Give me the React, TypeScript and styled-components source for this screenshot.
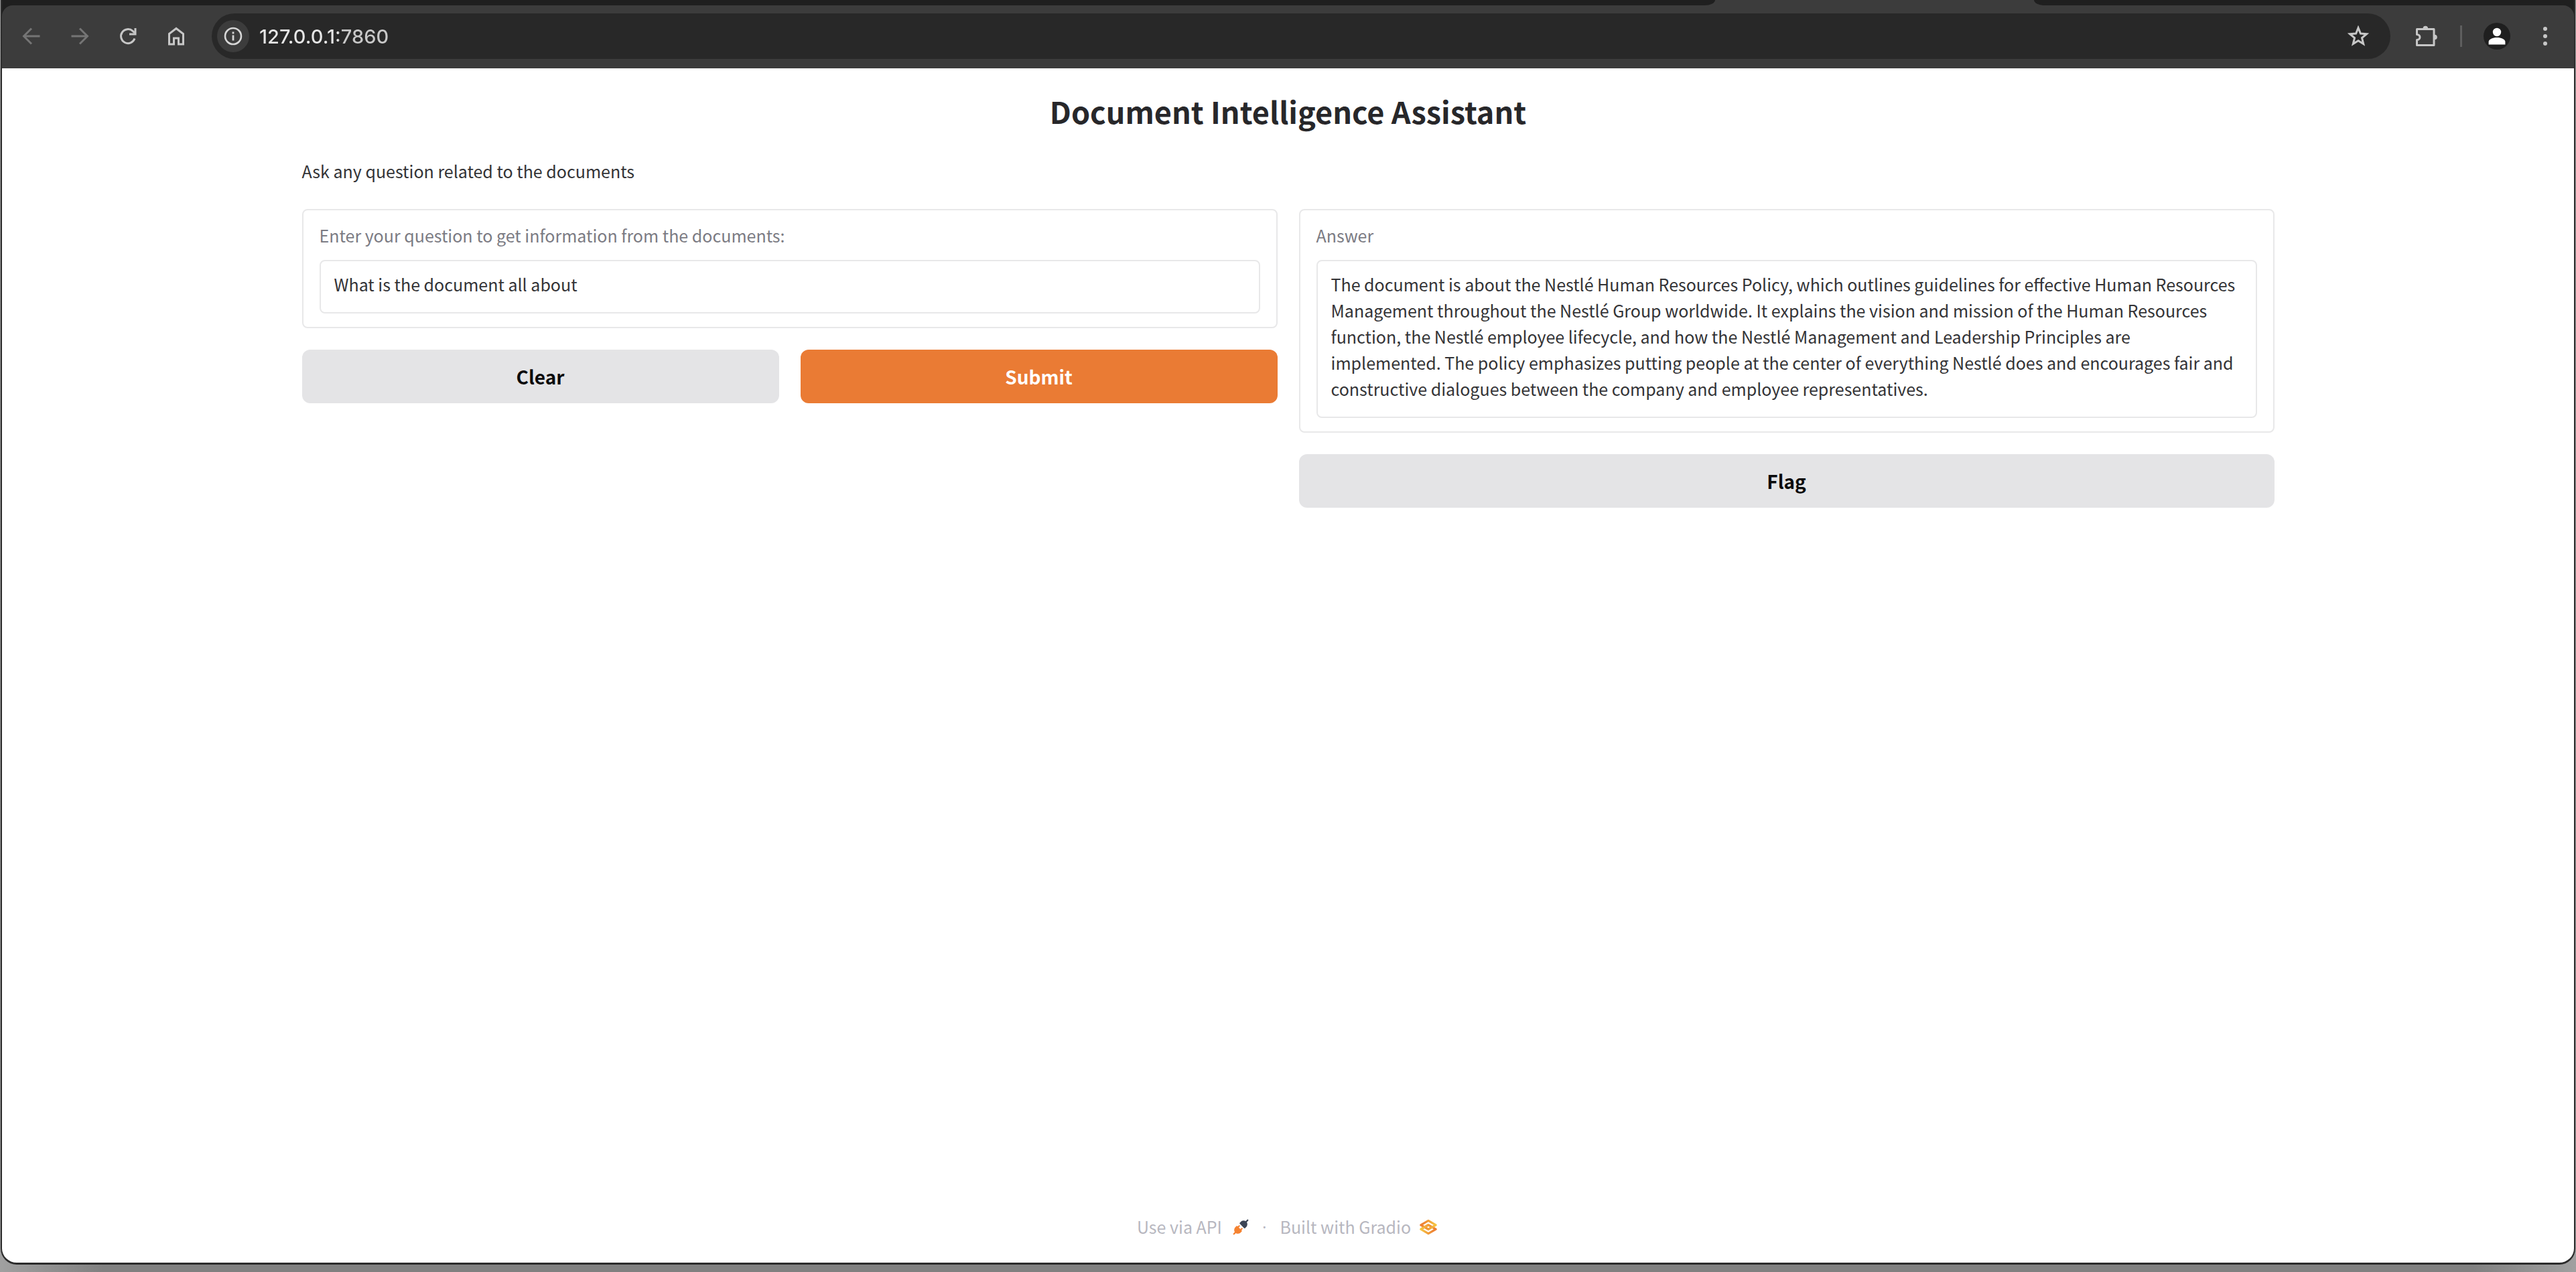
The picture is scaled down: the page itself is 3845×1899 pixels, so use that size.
import React, { useState } from "react";
import styled, { createGlobalStyle } from "styled-components";

const GlobalStyle = createGlobalStyle`
  *, *::before, *::after { box-sizing: border-box; }
  body {
    margin: 0;
    background: #868686;
    font-family: "Noto Sans CJK SC", "Source Sans Pro", sans-serif;
    font-size: 25px;
    line-height: 39px;
    color: #333336;
  }
  button, input, textarea { font: inherit; color: inherit; }
`;

const Desktop = styled.div`
  display: flex;
  min-height: 100vh;
  padding: 0 1px 11px;
  background: linear-gradient(90deg, #a0a0a0, #808080 4%, #808080 96%, #a0a0a0);
`;

const BrowserWindow = styled.div`
  flex: 1;
  display: flex;
  flex-direction: column;
  border: solid #2c2c2c;
  border-width: 0 2px 3px;
  border-radius: 0 0 24px 24px;
  overflow: hidden;
  background: #fff;
`;

const Chrome = styled.header`
  background: #1f1f1f;
`;

const TabStrip = styled.div`
  display: flex;
  height: 8px;
  background: #3c3c3c;
`;

const TabGap = styled.div<{ $grow: number; $side: "left" | "right" }>`
  flex: ${(p) => p.$grow} 1 0;
  background: #1f1f1f;
  border-radius: ${(p) => (p.$side === "left" ? "0 0 16px 0" : "0 0 0 16px")} / ${(p) =>
    p.$side === "left" ? "0 0 8px 0" : "0 0 0 8px"};
`;

const ActiveTab = styled.div`
  flex: 0 0 476px;
`;

const Toolbar = styled.div`
  display: flex;
  align-items: center;
  height: 94px;
  padding: 0 7px 2px 20px;
  background: #3c3c3c;
  border-radius: 16px 16px 0 0;
`;

const IconButton = styled.button<{ $color?: string }>`
  display: flex;
  flex: none;
  align-items: center;
  justify-content: center;
  width: 72px;
  height: 56px;
  padding: 0;
  border: 0;
  background: none;
  color: ${(p) => p.$color ?? "#c7c7c7"};
`;

const Nav = styled.nav`
  display: flex;
  margin-left: -12px;
`;

const Omnibox = styled.div`
  flex: 1;
  display: flex;
  align-items: center;
  height: 68px;
  margin-left: 17px;
  padding: 0 12px 0 8px;
  border-radius: 34px;
  background: #282828;
`;

const SiteInfo = styled.button`
  display: flex;
  flex: none;
  align-items: center;
  justify-content: center;
  width: 48px;
  height: 48px;
  padding: 0;
  border: 0;
  border-radius: 50%;
  background: #3c3c3c;
  color: #d6d6d6;
`;

/* The host is drawn brighter than the port that follows it. */
const Address = styled.input`
  flex: 1;
  min-width: 0;
  height: 48px;
  margin-left: 15px;
  padding: 0;
  border: 0;
  outline: 0;
  background: linear-gradient(90deg, #e6e6e6 118px, #c8c8c8 118px);
  background-clip: text;
  -webkit-background-clip: text;
  color: transparent;
  font-family: Inter, sans-serif;
  font-size: 29px;
  font-weight: 500;
`;

const Extras = styled.div`
  display: flex;
  align-items: center;
  margin-left: 18px;
`;

const Divider = styled.span`
  width: 3px;
  height: 32px;
  margin: 0 16px 0 14px;
  background: #5e5e5e;
`;

const Avatar = styled.span`
  display: flex;
  align-items: center;
  justify-content: center;
  width: 40px;
  height: 40px;
  border-radius: 50%;
  background: #1f1f1f;
  color: #fff;
`;

const Page = styled.main`
  flex: 1;
  width: 100%;
  max-width: 3072px;
  margin: 0 auto;
  padding: 34px 64px;
`;

const Title = styled.h1`
  margin: 0;
  font-size: 45px;
  font-weight: 600;
  line-height: 60px;
  text-align: center;
  color: #27272a;
`;

const Description = styled.p`
  margin: 40px 0 37px;
`;

const Columns = styled.div`
  display: grid;
  grid-template-columns: 1fr 1fr;
  align-items: start;
  gap: 32px;
`;

const Column = styled.section`
  display: flex;
  flex-direction: column;
  gap: 32px;
`;

const Card = styled.div`
  display: flex;
  flex-direction: column;
  padding: 20px 24px;
  border: 2px solid #e8e8e9;
  border-radius: 8px;
`;

const Label = styled.label`
  margin-bottom: 20px;
  line-height: 34px;
  color: #7b7b83;
`;

const TextBox = styled.textarea`
  display: block;
  width: 100%;
  padding: 15px 20px 22px;
  border: 2px solid #e8e8e9;
  border-radius: 8px;
  outline: 0;
  background: #fff;
  line-height: 39px;
  resize: none;
  overflow: hidden;
`;

const ButtonRow = styled.div`
  display: flex;
  gap: 32px;
`;

const Button = styled.button<{ $primary?: boolean }>`
  flex: 1;
  height: 80px;
  padding: 0;
  border: 0;
  border-radius: 12px;
  background: ${(p) => (p.$primary ? "#ea7b34" : "#e4e4e6")};
  color: ${(p) => (p.$primary ? "#fff" : "#0b0b0c")};
  font-size: 28px;
  font-weight: 600;
`;

const Footer = styled.footer`
  display: flex;
  align-items: center;
  justify-content: center;
  gap: 20px;
  padding-bottom: 34px;
  color: #b7b7bf;
`;

const Dot = styled.span`
  font-family: "Open Sans", sans-serif;
`;

const ApiButton = styled.button`
  display: flex;
  align-items: center;
  gap: 16px;
  padding: 0;
  border: 0;
  background: none;
`;

const GradioLink = styled.a`
  display: flex;
  align-items: center;
  gap: 10px;
  color: inherit;
  text-decoration: none;
`;

type GlyphProps = { d: string; size?: number; stroke?: number };

const Glyph = ({ d, size = 32, stroke = 3 }: GlyphProps) => (
  <svg width={size} height={size} viewBox="0 0 32 32" fill="none" stroke="currentColor" strokeWidth={stroke} aria-hidden="true">
    <path d={d} />
  </svg>
);

const ReloadIcon = () => (
  <svg width="32" height="32" viewBox="0 0 32 32" aria-hidden="true">
    <path d="M26 19.5A10.5 10.5 0 1 1 23.2 8.4L26 11" fill="none" stroke="currentColor" strokeWidth="3" />
    <path d="M25.5 4H28.5V14.5H18V11.5H25.5Z" fill="currentColor" />
  </svg>
);

const InfoIcon = () => (
  <svg width="28" height="28" viewBox="0 0 28 28" aria-hidden="true">
    <circle cx="14" cy="14" r="12" fill="none" stroke="currentColor" strokeWidth="2.6" />
    <path d="M12.6 12.4h2.8v8h-2.8zM12.6 7.6h2.8v2.8h-2.8z" fill="currentColor" />
  </svg>
);

const PuzzleIcon = () => (
  <svg width="36" height="36" viewBox="0 0 36 36" aria-hidden="true">
    <path
      d="M5 7.5H29V31.5H3.5V23.5C6 23.5 8 21.8 8 19.5S6 15.5 3.5 15.5V7.5Z"
      fill="none"
      stroke="currentColor"
      strokeWidth="3"
      strokeLinejoin="round"
    />
    <path d="M12.5 6.5a3.8 3.8 0 0 1 7.6 0zM30 15.7a3.8 3.8 0 0 1 0 7.6z" fill="currentColor" />
  </svg>
);

const PersonIcon = () => (
  <svg width="28" height="28" viewBox="0 0 28 28" fill="currentColor" aria-hidden="true">
    <circle cx="14" cy="8" r="6.2" />
    <path d="M1.6 26.5V22.5C1.6 18.5 8 16 14 16S26.4 18.5 26.4 22.5V26.5Z" />
  </svg>
);

const MenuIcon = () => (
  <svg width="8" height="32" viewBox="0 0 8 32" fill="currentColor" aria-hidden="true">
    <circle cx="4" cy="5" r="3" />
    <circle cx="4" cy="16" r="3" />
    <circle cx="4" cy="27" r="3" />
  </svg>
);

const RocketIcon = () => (
  <svg width="24" height="24" viewBox="0 0 28 28" aria-hidden="true">
    <path
      fill="#3c4555"
      d="M26.9425 2.94265C27.4632 2.42195 27.4632 1.57773 26.9425 1.05703C26.4218 0.536329 25.5776 0.536329 25.0569 1.05703L22.5713 3.54256C21.1213 2.59333 19.5367 2.43378 18.1753 2.64006C16.5495 2.88638 15.1127 3.66838 14.3905 4.39053L12.3905 6.39053C12.1405 6.64058 12 6.97972 12 7.33334C12 7.68697 12.1405 8.0261 12.3905 8.27615L19.7239 15.6095C20.2446 16.1302 21.0888 16.1302 21.6095 15.6095L23.6095 13.6095C24.3316 12.8873 25.1136 11.4505 25.36 9.82475C25.5663 8.46312 25.4066 6.87827 24.4571 5.42807L26.9425 2.94265Z"
    />
    <path
      fill="#f58230"
      d="M12.276 12.9426C12.7967 12.4219 12.7967 11.5777 12.276 11.057C11.7553 10.5363 10.9111 10.5363 10.3904 11.057L8.66651 12.7809L8.27615 12.3905C7.75545 11.8698 6.91123 11.8698 6.39053 12.3905L4.39053 14.3905C3.66838 15.1127 2.88638 16.5495 2.64006 18.1753C2.43378 19.5367 2.59333 21.1213 3.54256 22.5713L1.05703 25.0569C0.536329 25.5776 0.536329 26.4218 1.05703 26.9425C1.57773 27.4632 2.42195 27.4632 2.94265 26.9425L5.42807 24.4571C6.87827 25.4066 8.46312 25.5663 9.82475 25.36C11.4505 25.1136 12.8873 24.3316 13.6095 23.6095L15.6095 21.6095C16.1302 21.0888 16.1302 20.2446 15.6095 19.7239L15.2188 19.3332L16.9427 17.6093C17.4634 17.0886 17.4634 16.2444 16.9427 15.7237C16.422 15.203 15.5777 15.203 15.057 15.7237L13.3332 17.4475L10.5521 14.6665L12.276 12.9426Z"
    />
  </svg>
);

const GradioLogo = () => (
  <svg width="32" height="32" viewBox="0 0 576 576" fill="none" strokeWidth="59" strokeLinejoin="round" aria-hidden="true">
    <defs>
      <linearGradient id="gradioLower" x1="60" y1="341" x2="429" y2="344" gradientUnits="userSpaceOnUse">
        <stop stopColor="#f7cb45" />
        <stop offset="1" stopColor="#ee8133" />
      </linearGradient>
      <linearGradient id="gradioUpper" x1="513" y1="231" x2="143" y2="231" gradientUnits="userSpaceOnUse">
        <stop stopColor="#f7cb45" />
        <stop offset="1" stopColor="#ee8133" />
      </linearGradient>
    </defs>
    <path d="M287.5 229L86 344.5L287.5 460L489 344.5L287.5 229Z" stroke="url(#gradioLower)" />
    <path d="M287.5 116L86 231.5L287.5 347L489 231.5L287.5 116Z" stroke="url(#gradioUpper)" />
    <path d="M86 344L288 229" stroke="url(#gradioLower)" />
  </svg>
);

const ANSWER =
  "The document is about the Nestlé Human Resources Policy, which outlines guidelines for effective Human Resources Management throughout the Nestlé Group worldwide. It explains the vision and mission of the Human Resources function, the Nestlé employee lifecycle, and how the Nestlé Management and Leadership Principles are implemented. The policy emphasizes putting people at the center of everything Nestlé does and encourages fair and constructive dialogues between the company and employee representatives.";

const BrowserChrome = () => (
  <Chrome>
    <TabStrip>
      <TabGap $grow={2557} $side="left" />
      <ActiveTab />
      <TabGap $grow={806} $side="right" />
    </TabStrip>
    <Toolbar>
      <Nav>
        <IconButton aria-label="Back" $color="#757575">
          <Glyph d="M28.5 16H5M16 4.5L4.5 16L16 27.5" />
        </IconButton>
        <IconButton aria-label="Forward" $color="#757575">
          <Glyph d="M3.5 16H27M16 4.5L27.5 16L16 27.5" />
        </IconButton>
        <IconButton aria-label="Reload">
          <ReloadIcon />
        </IconButton>
        <IconButton aria-label="Home">
          <Glyph d="M5.5 12.5L16 4.5L26.5 12.5V28H19.5V19H12.5V28H5.5Z" />
        </IconButton>
      </Nav>
      <Omnibox>
        <SiteInfo aria-label="View site information">
          <InfoIcon />
        </SiteInfo>
        <Address aria-label="Address" defaultValue="127.0.0.1:7860" />
        <IconButton aria-label="Bookmark this page">
          <Glyph
            d="M16 3.5L19.4 12L28.5 12.7L21.5 18.6L23.7 27.5L16 22.7L8.3 27.5L10.5 18.6L3.5 12.7L12.6 12Z"
            stroke={3}
          />
        </IconButton>
      </Omnibox>
      <Extras>
        <IconButton aria-label="Extensions">
          <PuzzleIcon />
        </IconButton>
        <Divider />
        <IconButton aria-label="Profile">
          <Avatar>
            <PersonIcon />
          </Avatar>
        </IconButton>
        <IconButton aria-label="Browser menu">
          <MenuIcon />
        </IconButton>
      </Extras>
    </Toolbar>
  </Chrome>
);

export default function App() {
  const [question, setQuestion] = useState("What is the document all about");
  const [answer, setAnswer] = useState(ANSWER);

  const clear = () => {
    setQuestion("");
    setAnswer("");
  };

  return (
    <>
      <GlobalStyle />
      <Desktop>
        <BrowserWindow>
          <BrowserChrome />
          <Page>
            <Title>Document Intelligence Assistant</Title>
            <Description>Ask any question related to the documents</Description>
            <Columns>
              <Column>
                <Card>
                  <Label htmlFor="question">Enter your question to get information from the documents:</Label>
                  <TextBox id="question" rows={1} spellCheck={false} value={question} onChange={(e) => setQuestion(e.target.value)} />
                </Card>
                <ButtonRow>
                  <Button type="button" onClick={clear}>Clear</Button>
                  <Button type="button" $primary onClick={() => setAnswer(ANSWER)}>Submit</Button>
                </ButtonRow>
              </Column>
              <Column>
                <Card>
                  <Label htmlFor="answer">Answer</Label>
                  <TextBox id="answer" rows={5} readOnly value={answer} />
                </Card>
                <ButtonRow>
                  <Button type="button">Flag</Button>
                </ButtonRow>
              </Column>
            </Columns>
          </Page>
          <Footer>
            <ApiButton type="button">
              Use via API
              <RocketIcon />
            </ApiButton>
            <Dot>·</Dot>
            <GradioLink href="https://gradio.app">
              Built with Gradio
              <GradioLogo />
            </GradioLink>
          </Footer>
        </BrowserWindow>
      </Desktop>
    </>
  );
}
